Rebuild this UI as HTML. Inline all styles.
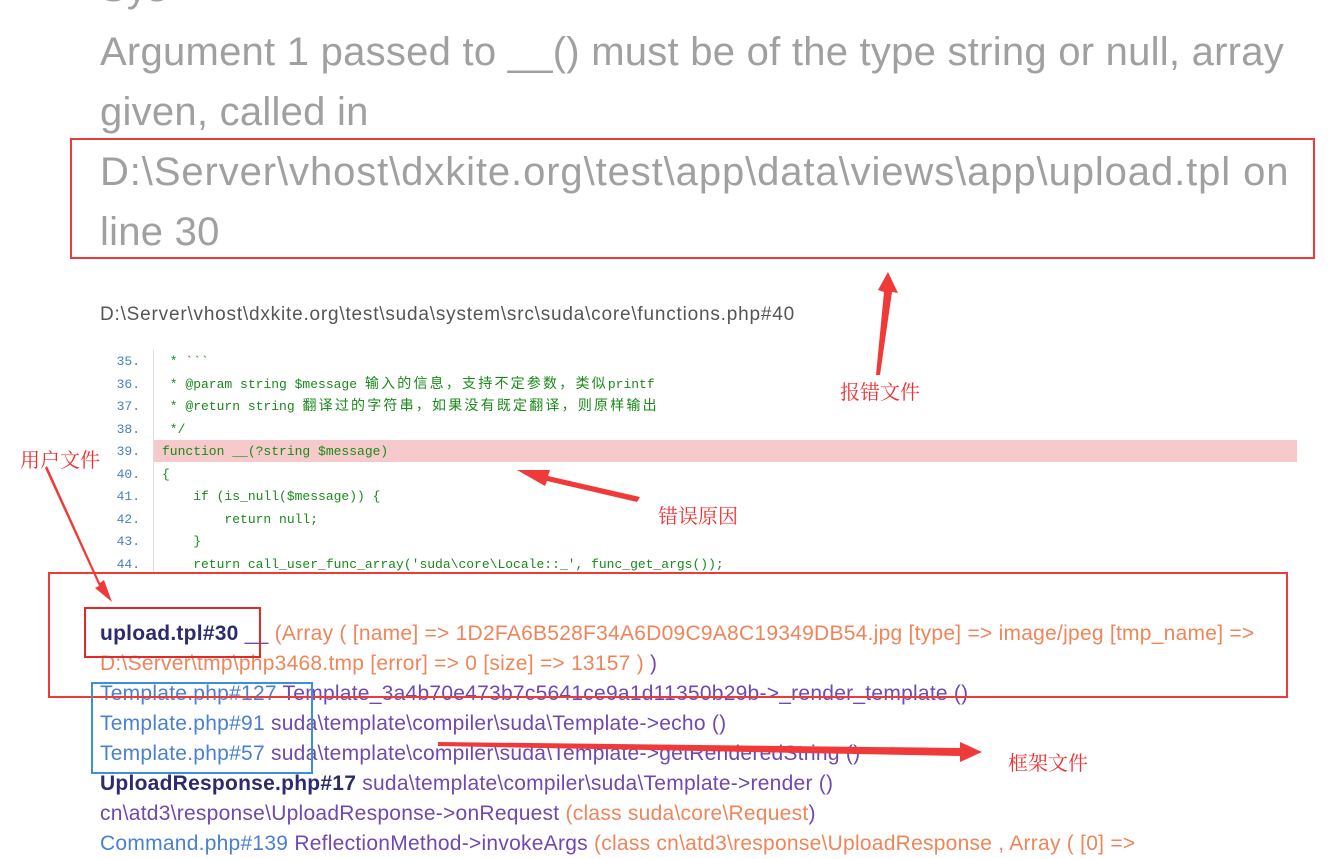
<!DOCTYPE html>
<html><head><meta charset="utf-8"><style>
body{margin:0;width:1343px;height:847px;overflow:hidden;background:#fff;font-family:"Liberation Sans","Noto Sans CJK SC",sans-serif;position:relative}
.a{position:absolute;white-space:nowrap}
.big{left:100px;font-size:40px;color:#a0a0a0;line-height:60px;letter-spacing:0.25px}
.code{font-family:"Liberation Mono","Noto Sans CJK SC",monospace;font-size:13px;color:#1a8a1a;line-height:22.5px;white-space:pre}
.c{font-size:14px;letter-spacing:2.2px}
.ln{left:100px;width:40px;text-align:right;color:#4a7fc0;font-family:"Liberation Mono",monospace;font-size:13px;line-height:22.5px}
.tr{left:100px;font-size:21px;line-height:30px;letter-spacing:0.25px}
.nv{color:#2b2b6e;font-weight:bold}.or{color:#f0855a}.bl{color:#4a80d0}.pu{color:#7048b0}
.cn{font-family:"Noto Serif CJK SC","Noto Sans CJK SC",serif;color:#f03030;font-size:20px}
</style></head><body>
<div class="a big" style="top:-42px">Sys</div>
<div class="a big" style="top:22px">Argument 1 passed to __() must be of the type string or null, array</div>
<div class="a big" style="top:82px">given, called in</div>
<div class="a big" style="top:142px;letter-spacing:0.9px">D:\Server\vhost\dxkite.org\test\app\data\views\app\upload.tpl on</div>
<div class="a big" style="top:202px">line 30</div>
<div class="a" style="left:100px;top:304px;font-size:19px;letter-spacing:0.8px;color:#555">D:\Server\vhost\dxkite.org\test\suda\system\src\suda\core\functions.php#40</div>
<div class="a" style="left:153px;top:350px;width:1px;height:222px;background:#ddd"></div>
<div class="a" style="left:154px;top:440px;width:1143px;height:22px;background:#f6caca"></div>
<div class="a ln" style="top:351px">35.<br>36.<br>37.<br>38.<br>39.<br>40.<br>41.<br>42.<br>43.<br>44.</div>
<div class="a code" style="left:162px;top:351px"> * &#96;&#96;&#96;
 * @param string $message <span class="c">输入的信息，支持不定参数，类似</span>printf
 * @return string <span class="c">翻译过的字符串，如果没有既定翻译，则原样输出</span>
 */
function __(?string $message)
{
    if (is_null($message)) {
        return null;
    }
    return call_user_func_array('suda\core\Locale::_', func_get_args());</div>
<div class="a tr" style="top:619px"><span class="nv">upload.tpl#30</span> <span class="pu">__</span> <span class="or">(Array ( [name] =&gt; 1D2FA6B528F34A6D09C9A8C19349DB54.jpg [type] =&gt; image/jpeg [tmp_name] =&gt;</span></div>
<div class="a tr" style="top:649px"><span class="or">D:\Server\tmp\php3468.tmp [error] =&gt; 0 [size] =&gt; 13157 )</span> <span class="pu">)</span></div>
<div class="a tr" style="top:679px"><span class="bl">Template.php#127</span> <span class="pu">Template_3a4b70e473b7c5641ce9a1d11350b29b-&gt;_render_template ()</span></div>
<div class="a tr" style="top:709px"><span class="bl">Template.php#91</span> <span class="pu">suda\template\compiler\suda\Template-&gt;echo ()</span></div>
<div class="a tr" style="top:739px"><span class="bl">Template.php#57</span> <span class="pu">suda\template\compiler\suda\Template-&gt;getRenderedString ()</span></div>
<div class="a tr" style="top:769px"><span class="nv">UploadResponse.php#17</span> <span class="pu">suda\template\compiler\suda\Template-&gt;render ()</span></div>
<div class="a tr" style="top:799px"><span class="pu">cn\atd3\response\UploadResponse-&gt;onRequest</span> <span class="or">(class suda\core\Request</span><span class="pu">)</span></div>
<div class="a tr" style="top:829px"><span class="bl">Command.php#139</span> <span class="pu">ReflectionMethod-&gt;invokeArgs</span> <span class="or">(class cn\atd3\response\UploadResponse , Array ( [0] =&gt;</span></div>
<div class="a" style="left:70px;top:138px;width:1241px;height:117px;border:2px solid #f03a3a"></div>
<div class="a" style="left:48px;top:572px;width:1236px;height:122px;border:2px solid #f03a3a"></div>
<div class="a" style="left:84px;top:607px;width:173px;height:47px;border:2px solid #e02a2a"></div>
<div class="a" style="left:91px;top:682px;width:218px;height:88px;border:2px solid #3a90e0"></div>
<div class="a cn" style="left:840px;top:376px">报错文件</div>
<div class="a cn" style="left:20px;top:444px">用户文件</div>
<div class="a cn" style="left:658px;top:500px">错误原因</div>
<div class="a cn" style="left:1008px;top:747px">框架文件</div>
<svg class="a" style="left:0;top:0" width="1343" height="847">
<g fill="#f03a3a">
<polygon points="876,375 880,375 892,292 898,293 888,272 878,290 884,292"/>
<polygon points="637,502 640,497 548,476 550,470 517,470 545,486 547,481"/>
<polygon points="45,468 47,466 100,583 104,580 112,602 95,588 99,586"/>
<polygon points="438,742 438,746 960,756 960,762 982,752 960,742 960,748"/>
</g></svg>
</body></html>
